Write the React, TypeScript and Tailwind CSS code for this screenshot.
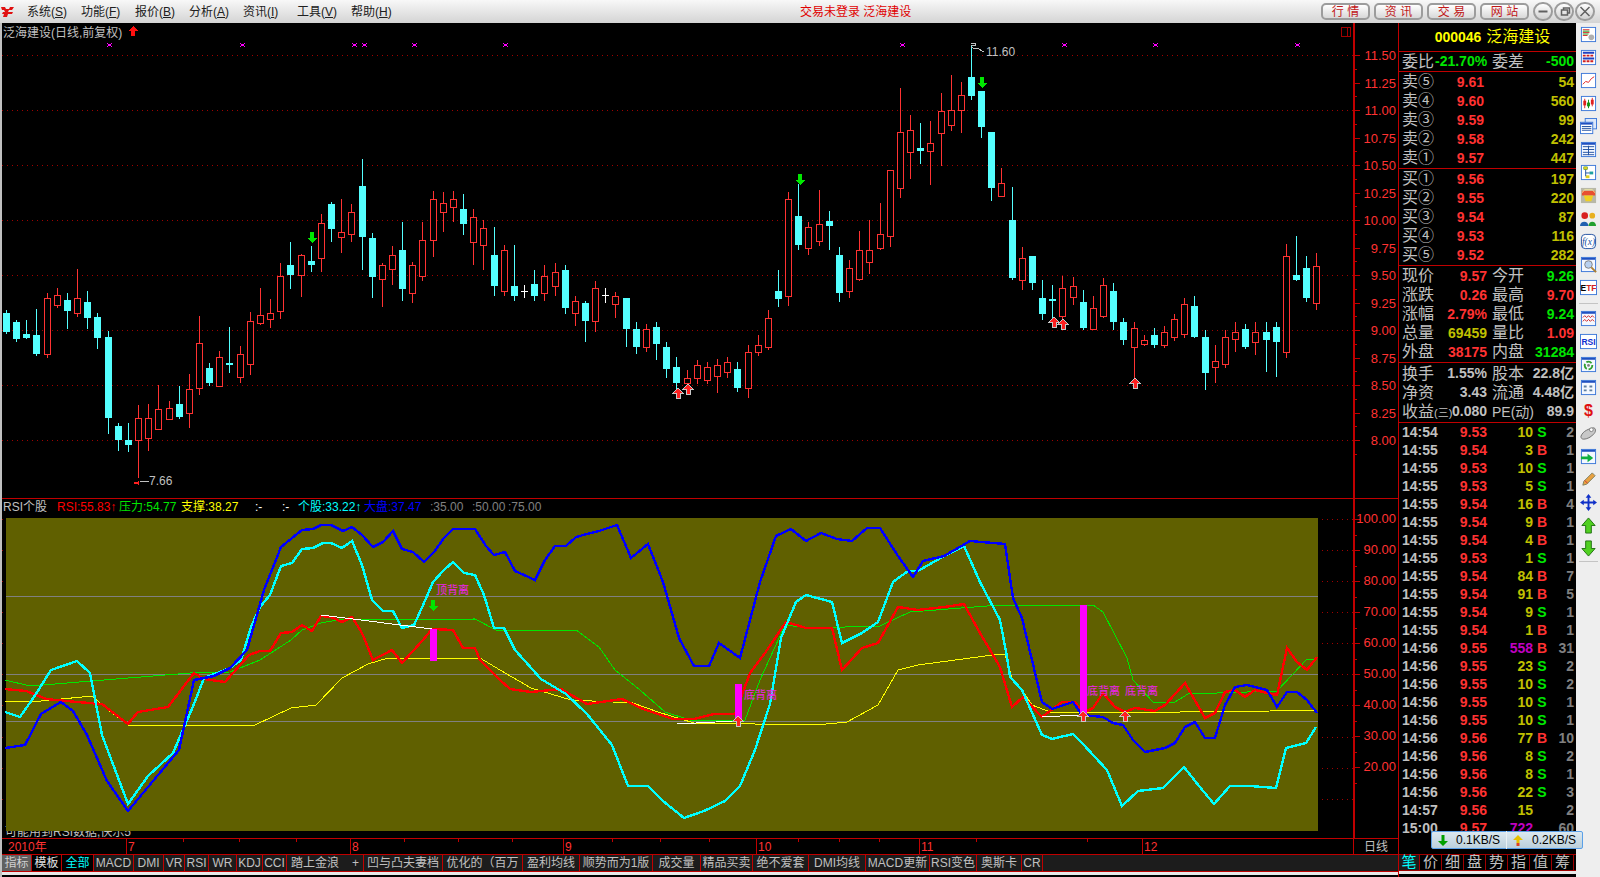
import type { ReactNode } from "react";

type Candle = [number, number, number, number, "r" | "c" | "w"];

// body top, body bottom, wick top, wick bottom (page pixels)
const candles: Candle[] = [
  [313, 332, 310, 334, "c"], [322, 339, 320, 342, "c"], [334, 338, 320, 339, "c"], [335, 354, 309, 356, "c"],
  [298, 354, 293, 358, "r"], [295, 305, 288, 308, "r"], [300, 311, 293, 329, "c"], [298, 313, 269, 317, "r"],
  [302, 318, 291, 329, "c"], [317, 338, 313, 349, "c"], [337, 418, 331, 434, "c"], [426, 440, 423, 451, "c"],
  [440, 445, 423, 452, "c"], [418, 440, 405, 478, "r"], [418, 438, 404, 451, "r"], [409, 429, 385, 430, "r"],
  [408, 419, 401, 419, "r"], [404, 417, 386, 419, "c"], [389, 413, 374, 428, "r"], [343, 388, 316, 395, "r"],
  [368, 383, 363, 386, "c"], [357, 386, 351, 386, "r"], [363, 365, 327, 373, "c"], [354, 377, 346, 383, "r"],
  [321, 364, 312, 375, "r"], [315, 323, 288, 325, "r"], [313, 319, 299, 328, "r"], [276, 311, 263, 319, "r"],
  [265, 275, 242, 289, "c"], [255, 275, 254, 297, "r"], [261, 265, 246, 272, "c"], [223, 258, 214, 272, "r"],
  [204, 229, 202, 242, "c"], [232, 237, 199, 253, "r"], [212, 234, 204, 242, "r"], [186, 237, 159, 270, "c"],
  [238, 277, 233, 298, "c"], [265, 279, 263, 307, "r"], [255, 269, 246, 285, "r"], [250, 289, 222, 301, "c"],
  [265, 293, 262, 303, "r"], [240, 276, 222, 281, "r"], [199, 240, 191, 257, "r"], [203, 212, 192, 232, "r"],
  [199, 207, 191, 222, "r"], [209, 224, 194, 235, "c"], [217, 242, 209, 265, "r"], [228, 245, 220, 270, "r"],
  [255, 286, 227, 296, "c"], [250, 291, 245, 296, "r"], [286, 296, 245, 301, "c"], [291, 292, 285, 298, "w"],
  [284, 296, 270, 301, "c"], [276, 293, 265, 301, "r"], [272, 286, 263, 296, "r"], [270, 308, 265, 314, "c"],
  [301, 313, 296, 326, "r"], [303, 321, 301, 342, "c"], [288, 321, 281, 332, "r"], [295, 296, 288, 303, "w"],
  [296, 304, 292, 318, "r"], [298, 329, 298, 347, "c"], [329, 347, 322, 354, "c"], [329, 347, 324, 352, "r"],
  [327, 344, 322, 360, "c"], [347, 369, 342, 378, "c"], [367, 383, 357, 393, "c"], [378, 383, 370, 393, "r"],
  [365, 378, 360, 384, "r"], [367, 380, 362, 384, "r"], [365, 376, 359, 393, "r"], [362, 372, 357, 378, "r"],
  [369, 388, 362, 392, "c"], [352, 388, 345, 398, "r"], [345, 352, 335, 356, "r"], [318, 347, 310, 350, "r"],
  [291, 299, 270, 307, "c"], [199, 296, 192, 306, "r"], [216, 245, 184, 250, "c"], [227, 248, 222, 255, "r"],
  [224, 241, 190, 246, "r"], [221, 226, 211, 250, "c"], [255, 293, 247, 302, "c"], [268, 291, 260, 298, "r"],
  [250, 279, 231, 281, "r"], [250, 262, 220, 274, "r"], [234, 248, 203, 250, "r"], [170, 236, 170, 247, "r"],
  [132, 188, 88, 198, "r"], [130, 152, 115, 179, "r"], [148, 151, 123, 164, "c"], [143, 151, 121, 185, "r"],
  [111, 133, 93, 166, "r"], [110, 125, 75, 131, "r"], [95, 110, 82, 133, "r"], [77, 96, 45, 100, "c"],
  [91, 127, 91, 138, "c"], [132, 188, 132, 201, "c"], [183, 196, 168, 196, "r"], [220, 278, 187, 280, "c"],
  [258, 280, 247, 290, "r"], [256, 283, 256, 290, "c"], [298, 314, 280, 320, "c"], [299, 301, 285, 320, "c"],
  [288, 316, 276, 330, "r"], [286, 297, 277, 305, "r"], [302, 328, 290, 330, "c"], [308, 329, 296, 330, "r"],
  [285, 316, 278, 318, "r"], [291, 322, 283, 330, "c"], [322, 340, 318, 345, "c"], [328, 347, 322, 385, "r"],
  [340, 344, 335, 346, "r"], [335, 345, 328, 348, "c"], [332, 345, 326, 348, "r"], [319, 337, 314, 341, "r"],
  [304, 334, 298, 338, "r"], [306, 337, 296, 338, "c"], [337, 373, 330, 390, "c"], [361, 367, 345, 383, "r"],
  [337, 364, 330, 368, "r"], [332, 339, 322, 352, "r"], [329, 347, 324, 349, "c"], [332, 342, 322, 355, "r"],
  [332, 340, 322, 372, "c"], [327, 342, 322, 377, "c"], [256, 352, 244, 358, "r"], [275, 280, 236, 281, "c"],
  [268, 298, 256, 302, "c"], [266, 303, 253, 310, "r"],
];

const candleX = (i: number) => Math.round(6 + 10.158 * i);

const blueLine = "5,748 25,745 41,714 61,702 73,711 87,735 107,781 128,811 153,781 179,750 194,680 214,676 230,668 247,650 264,590 281,547 302,530 313,529 321,525 331,525 343,531 352,527 362,535 373,547 383,542 393,531 402,549 413,552 424,562 434,552 444,538 453,529 475,529 486,546 494,555 505,552 515,571 524,575 535,580 545,560 555,546 566,546 576,537 587,534 599,531 617,525 631,558 648,544 663,582 679,638 694,666 709,666 719,643 740,658 760,582 776,536 791,529 806,541 821,533 837,539 852,541 867,528 880,528 898,556 913,577 923,561 944,556 970,541 1005,544 1013,598 1022,618 1042,702 1052,709 1073,702 1082,715 1103,717 1113,723 1123,725 1133,740 1145,752 1165,748 1175,743 1185,727 1195,722 1205,738 1215,738 1225,705 1235,687 1247,685 1267,690 1277,707 1287,692 1297,692 1307,700 1317,713";
const cyanLine = "5,712 20,717 36,694 51,670 77,661 90,673 102,735 128,804 148,776 173,753 194,704 204,678 230,668 241,660 251,627 260,607 270,595 281,566 292,563 302,549 313,548 323,543 331,543 342,548 352,541 362,565 372,600 383,611 393,611 402,628 414,625 424,603 433,582 444,570 453,562 464,573 475,575 484,595 494,628 504,628 515,650 524,660 541,679 566,694 587,714 612,745 628,786 648,786 663,801 684,818 704,811 725,801 740,786 755,750 770,704 781,638 796,602 806,595 832,602 842,643 862,633 878,622 893,582 908,571 918,571 944,556 964,546 980,582 1000,620 1007,657 1010,677 1022,690 1042,735 1052,739 1073,734 1082,743 1107,770 1122,806 1138,791 1163,788 1184,767 1199,786 1214,804 1230,786 1250,786 1276,788 1286,748 1306,743 1316,727";
const redLine = "5,689 26,691 46,699 77,702 102,704 128,724 138,712 168,707 194,673 204,679 225,682 249,655 260,651 270,651 281,633 292,632 302,625 312,631 321,616 331,617 342,622 352,617 362,633 373,660 392,650 402,663 423,640 432,629 453,630 463,648 475,648 480,660 500,680 510,689 531,692 561,689 587,704 622,699 643,709 673,719 694,719 714,714 735,714 750,673 765,653 786,622 806,628 832,628 842,670 862,648 878,643 898,607 918,610 944,607 964,604 980,633 1000,667 1012,707 1023,697 1042,717 1062,702 1075,702 1083,713 1093,708 1103,693 1115,707 1125,712 1135,708 1155,711 1165,705 1185,683 1205,718 1215,713 1225,692 1235,690 1245,697 1255,690 1267,693 1277,695 1287,648 1297,662 1307,670 1317,657";
const greenLine = "5,680 30,686 190,673 230,672 260,660 291,640 302,630 321,623 337,620 475,619 496,630 576,630 599,647 615,670 640,690 665,712 690,720 745,720 760,680 785,625 810,628 880,626 910,612 1000,605 1093,605 1103,612 1127,658 1133,680 1153,702 1175,702 1188,694 1277,691 1307,659 1317,659";
const yellowLine = "5,701 41,701 92,696 107,709 128,725 255,725 291,708 316,705 342,678 368,664 388,658 480,658 500,670 531,688 571,700 633,703 658,712 694,723 816,725 847,722 878,705 898,670 918,665 1000,654 1005,655 1012,678 1022,690 1032,705 1050,712 1180,712 1270,711 1317,710";

const gridMain = [55, 110, 165, 220, 275, 330, 385, 440];
const gridSub = [519, 550, 581, 612, 643, 674, 705, 737, 768, 799];
const markers = [109, 242, 354, 364, 414, 505, 902, 1064, 1155, 1297];

function DownArrow({ x, y }: { x: number; y: number }) {
  return <polygon points={`${x - 2},${y - 6} ${x + 2},${y - 6} ${x + 2},${y} ${x + 5},${y} ${x},${y + 5} ${x - 5},${y}  ${x - 2},${y}`} fill="#00e600" />;
}

function UpArrow({ x, y }: { x: number; y: number }) {
  return (
    <polygon
      points={`${x},${y - 5} ${x + 5},${y} ${x + 2},${y} ${x + 2},${y + 5} ${x - 2},${y + 5} ${x - 2},${y} ${x - 5},${y}`}
      fill="#ff2020"
      stroke="#c8c8c8"
      strokeWidth="1"
    />
  );
}

function MainChart() {
  return (
    <svg viewBox="2 23 1351 475" className="block h-[475px] w-[1351px]" shapeRendering="crispEdges">
      {gridMain.map((y) => (
        <line key={y} x1="2" x2="1353" y1={y + 0.5} y2={y + 0.5} stroke="#a00000" strokeDasharray="1 4" />
      ))}
      {markers.map((x) => (
        <path key={x} d={`M${x - 2} 43h1v1h-1zM${x + 2} 43h1v1h-1zM${x} 44h1v2h-1zM${x - 1} 44h3v2h-3zM${x - 2} 46h1v1h-1zM${x + 2} 46h1v1h-1z`} fill="#ff00ff" />
      ))}
      {candles.map(([top, bottom, high, low, kind], i) => {
        const x = candleX(i);
        if (kind === "r") {
          return (
            <g key={i}>
              <line x1={x + 0.5} x2={x + 0.5} y1={high} y2={low} stroke="#ff3232" />
              <rect x={x - 2.5} y={top + 0.5} width={6} height={bottom - top} fill="#000" stroke="#ff3232" />
            </g>
          );
        }
        const color = kind === "c" ? "#54ffff" : "#ffffff";
        return (
          <g key={i}>
            <line x1={x + 0.5} x2={x + 0.5} y1={high} y2={low} stroke={color} />
            <rect x={x - 3} y={top} width={7} height={Math.max(bottom - top, 1)} fill={color} />
          </g>
        );
      })}
      <DownArrow x={312} y={238} />
      <DownArrow x={800} y={180} />
      <DownArrow x={982} y={83} />
      <UpArrow x={678} y={393} />
      <UpArrow x={688} y={389} />
      <UpArrow x={1054} y={322} />
      <UpArrow x={1063} y={324} />
      <UpArrow x={1135} y={383} />
      <polygon points="133,26 138,31 135,31 135,36 131,36 131,31 128,31" fill="#ff1010" />
      <rect x="1341.5" y="27.5" width="9" height="9" fill="none" stroke="#a00000" />
      <line x1="1347.5" x2="1347.5" y1="27" y2="37" stroke="#a00000" />
      <path d="M971 43h4v2h-4M971 47l4 2M975 48h3l4 3h2" fill="none" stroke="#c0c0c0" />
      <text x="986" y="56" fill="#c0c0c0" fontSize="12" shapeRendering="auto">11.60</text>
      <path d="M134 482h3l2-2 0 5-2-1h-3z" fill="#ff2020" />
      <path d="M140 481h9" stroke="#c0c0c0" />
      <text x="149" y="485" fill="#c0c0c0" fontSize="12">7.66</text>
    </svg>
  );
}

function SubChart() {
  return (
    <svg viewBox="2 518 1351 320" className="block h-[320px] w-[1351px]" shapeRendering="crispEdges">
      <text x="5" y="836" fill="#c0c0c0" fontSize="12">可能用到RSI数据,快乐5</text>
      {gridSub.map((y) => (
        <line key={y} x1="2" x2="1353" y1={y + 0.5} y2={y + 0.5} stroke="#a00000" strokeDasharray="1 4" />
      ))}
      <rect x="6" y="518" width="1312" height="313" fill="#606000" />
      {[596, 674, 721].map((y) => (
        <line key={y} x1="6" x2="1318" y1={y + 0.5} y2={y + 0.5} stroke="#808080" />
      ))}
      <polyline points={greenLine} fill="none" stroke="#00e600" />
      <polyline points={yellowLine} fill="none" stroke="#ffff00" />
      <polyline points={redLine} fill="none" stroke="#ff0000" strokeWidth="2.4" />
      <polyline points={cyanLine} fill="none" stroke="#00ffff" strokeWidth="2.4" />
      <polyline points={blueLine} fill="none" stroke="#0000ff" strokeWidth="2.4" />
      <polyline points="321,615 432,629" fill="none" stroke="#ffffff" />
      <polyline points="677,724 735,721" fill="none" stroke="#ffffff" />
      <polyline points="1042,717 1078,715" fill="none" stroke="#ffffff" />
      <rect x="430" y="629" width="7" height="32" fill="#ff00ff" />
      <rect x="735" y="684" width="7" height="36" fill="#ff00ff" />
      <rect x="1080" y="605" width="7" height="109" fill="#ff00ff" />
      <DownArrow x={433} y={606} />
      <UpArrow x={738} y={721} />
      <UpArrow x={1083} y={716} />
      <UpArrow x={1125} y={716} />
      <g fill="#f020f0" fontSize="11" fontWeight="400">
        <text x="436" y="594">顶背离</text>
        <text x="744" y="699">底背离</text>
        <text x="1087" y="695">底背离</text>
        <text x="1125" y="695">底背离</text>
      </g>
    </svg>
  );
}

function Axis({ labels, step, first, height, shift = 0 }: { labels: string[]; step: number; first: number; height: number; shift?: number }) {
  const longTicks = labels.map((_, i) => first + step * i);
  return (
    <div className="flex w-[45px] shrink-0 border-l-2 border-[#c00000]">
      <svg width="5" height={height} className="block shrink-0" shapeRendering="crispEdges">
        {longTicks.map((y) => (
          <g key={y} stroke="#c00000">
            <line x1="0" x2="5" y1={y + 0.5} y2={y + 0.5} />
            <line x1="0" x2="2" y1={y + step / 2 + 0.5} y2={y + step / 2 + 0.5} />
          </g>
        ))}
      </svg>
      <div className="flex min-w-0 flex-1 flex-col pr-[2px] text-right text-[13px] text-[#ff3232]" style={{ paddingTop: first - step / 2 + shift }}>
        {labels.map((label) => (
          <div key={label} className="flex items-center justify-end" style={{ height: step }}>
            {label}
          </div>
        ))}
      </div>
    </div>
  );
}

function Legend() {
  return (
    <div className="flex h-[19px] items-center whitespace-nowrap pb-[3px] pl-[1px] text-[12px]">
      <span className="w-[54px] text-[#c0c0c0]">RSI个股</span>
      <span className="w-[62px] text-[#ff0000]">RSI:55.83↑</span>
      <span className="w-[62px] text-[#00e600]">压力:54.77</span>
      <span className="w-[74px] text-[#ffff00]">支撑:38.27</span>
      <span className="w-[27px] text-white">:-</span>
      <span className="w-[16px] text-white">:-</span>
      <span className="w-[66px] text-[#00ffff]">个股:33.22↑</span>
      <span className="w-[66px] text-[#0000ff]">大盘:37.47</span>
      <span className="w-[42px] text-[#808080]">:35.00</span>
      <span className="w-[36px] text-[#808080]">:50.00</span>
      <span className="text-[#808080]">:75.00</span>
    </div>
  );
}

function TimeRow() {
  const cells: [string, number][] = [["2010年", 125], ["7", 224], ["8", 213], ["9", 193], ["10", 163], ["11", 223], ["12", 211]];
  const ticks = [183, 239, 296, 404, 458, 512, 612, 660, 709, 798, 839, 879, 976, 1087];
  return (
    <div className="relative flex h-[16px] border-t border-[#c00000] text-[12px] text-[#ff3232]">
      {cells.map(([label, width], i) => (
        <div key={label} className={`flex items-center border-r border-[#c00000] ${i === 0 ? "pl-[6px]" : "pl-[1px]"}`} style={{ width }}>
          {label}
        </div>
      ))}
      <div className="flex w-[44px] items-center justify-center text-[#c0c0c0]">日线</div>
      <svg className="pointer-events-none absolute left-0 top-0" width="1352" height="4" shapeRendering="crispEdges">
        {ticks.map((x) => (
          <line key={x} x1={x - 2} x2={x - 2} y1="0" y2="3" stroke="#c00000" />
        ))}
      </svg>
    </div>
  );
}

const tabs: [string, number, string][] = [
  ["指标", 30, "bg-[#606060] text-[#d0d0d0]"], ["模板", 30, "bg-black text-[#e0e0e0]"], ["全部", 32, "bg-black text-[#00ffff]"],
  ["MACD", 40, ""], ["DMI", 30, ""], ["VR", 21, ""], ["RSI", 24, ""], ["WR", 28, ""], ["KDJ", 26, ""], ["CCI", 24, ""],
  ["踏上金浪", 77, ""], ["凹与凸夫妻档", 79, ""], ["优化的（百万", 80, ""], ["盈利均线", 57, ""], ["顺势而为1版", 73, ""], ["成交量", 48, ""],
  ["精品买卖", 52, ""], ["绝不爱套", 56, ""], ["DMI均线", 57, ""], ["MACD更新", 64, ""], ["RSI变色", 47, ""], ["奥斯卡", 45, ""], ["CR", 21, ""],
];

function TabsRow() {
  return (
    <div className="flex h-[18px] border-y border-[#c00000] bg-[#1c1c1c] text-[12px] text-[#c0c0c0]">
      {tabs.map(([label, width, extra]) =>
        label === "踏上金浪" ? (
          <div key={label} className="flex items-center justify-between whitespace-nowrap border-r border-[#c00000] pl-[4px] pr-[4px]" style={{ width }}>
            <span>{label}</span>
            <span>+</span>
          </div>
        ) : (
          <div key={label} className={`flex items-center justify-center whitespace-nowrap border-r border-[#c00000] ${extra}`} style={{ width }}>
            {label}
          </div>
        ),
      )}
    </div>
  );
}

function Row({ children, className = "h-[19px]" }: { children: ReactNode; className?: string }) {
  return <div className={`flex items-center pl-[3px] pr-[2px] ${className}`}>{children}</div>;
}

const Label = ({ children, className = "w-[54px]" }: { children: ReactNode; className?: string }) => (
  <span className={`shrink-0 whitespace-nowrap text-[16px] font-normal text-[#c0c0c0] ${className}`}>{children}</span>
);

const asks: [string, string, string][] = [["卖⑤", "9.61", "54"], ["卖④", "9.60", "560"], ["卖③", "9.59", "99"], ["卖②", "9.58", "242"], ["卖①", "9.57", "447"]];
const bids: [string, string, string][] = [["买①", "9.56", "197"], ["买②", "9.55", "220"], ["买③", "9.54", "87"], ["买④", "9.53", "116"], ["买⑤", "9.52", "282"]];

function Quote({ rows }: { rows: [string, string, string][] }) {
  return (
    <div className="flex h-[97px] flex-col justify-center border-b border-[#c00000]">
      {rows.map(([label, price, vol]) => (
        <Row key={label}>
          <Label>{label}</Label>
          <span className="w-[28px] text-right text-[#ff3232]">{price}</span>
          <span className="flex-1 text-right text-[#c0c000]">{vol}</span>
        </Row>
      ))}
    </div>
  );
}

const stats: [string, string, string, string, string, string][] = [
  ["现价", "9.57", "text-[#ff3232]", "今开", "9.26", "text-[#00e600]"],
  ["涨跌", "0.26", "text-[#ff3232]", "最高", "9.70", "text-[#ff3232]"],
  ["涨幅", "2.79%", "text-[#ff3232]", "最低", "9.24", "text-[#00e600]"],
  ["总量", "69459", "text-[#c0c000]", "量比", "1.09", "text-[#ff3232]"],
  ["外盘", "38175", "text-[#ff3232]", "内盘", "31284", "text-[#00e600]"],
];
const funds: [string, string, string, string][] = [
  ["换手", "1.55%", "股本", "22.8亿"],
  ["净资", "3.43", "流通", "4.48亿"],
];

type Tick = [string, string, string, string, string];
const trades: Tick[] = [
  ["14:54", "9.53", "10", "S", "2"], ["14:55", "9.54", "3", "B", "1"], ["14:55", "9.53", "10", "S", "1"], ["14:55", "9.53", "5", "S", "1"],
  ["14:55", "9.54", "16", "B", "4"], ["14:55", "9.54", "9", "B", "1"], ["14:55", "9.54", "4", "B", "1"], ["14:55", "9.53", "1", "S", "1"],
  ["14:55", "9.54", "84", "B", "7"], ["14:55", "9.54", "91", "B", "5"], ["14:55", "9.54", "9", "S", "1"], ["14:55", "9.54", "1", "B", "1"],
  ["14:56", "9.55", "558", "B", "31"], ["14:56", "9.55", "23", "S", "2"], ["14:56", "9.55", "10", "S", "2"], ["14:56", "9.55", "10", "S", "1"],
  ["14:56", "9.55", "10", "S", "1"], ["14:56", "9.56", "77", "B", "10"], ["14:56", "9.56", "8", "S", "2"], ["14:56", "9.56", "8", "S", "1"],
  ["14:56", "9.56", "22", "S", "3"], ["14:57", "9.56", "15", "", "2"], ["15:00", "9.57", "722", "", "60"],
];

function QuotePanel() {
  return (
    <div className="relative flex w-[178px] shrink-0 flex-col border-l border-[#c00000] bg-black text-[14px] font-bold">
      <div className="flex h-[29px] items-center justify-center gap-[5px] border-b border-[#c00000] pl-[10px] text-[#ffff00]">
        <span>000046</span>
        <span className="text-[16px] font-normal">泛海建设</span>
      </div>
      <Row className="h-[20px] border-b border-[#c00000]">
        <Label className="w-[33px]">委比</Label>
        <span className="w-[52px] text-right text-[#00e600]">-21.70%</span>
        <Label className="ml-[5px] w-[32px]">委差</Label>
        <span className="flex-1 text-right text-[#00e600]">-500</span>
      </Row>
      <Quote rows={asks} />
      <Quote rows={bids} />
      <div className="flex h-[97px] flex-col justify-center border-b border-[#c00000]">
        {stats.map(([a, b, bColor, c, d, dColor]) => (
          <Row key={a}>
            <Label className="w-[38px]">{a}</Label>
            <span className={`w-[47px] text-right ${bColor}`}>{b}</span>
            <Label className="ml-[5px] w-[34px]">{c}</Label>
            <span className={`flex-1 text-right ${dColor}`}>{d}</span>
          </Row>
        ))}
      </div>
      <div className="flex h-[60px] flex-col justify-center border-b border-[#c00000] text-[#c0c0c0]">
        {funds.map(([a, b, c, d]) => (
          <Row key={a}>
            <Label className="w-[38px]">{a}</Label>
            <span className="w-[47px] text-right">{b}</span>
            <Label className="ml-[5px] w-[34px]">{c}</Label>
            <span className="flex-1 text-right">{d}</span>
          </Row>
        ))}
        <Row>
          <Label className="w-[49px]">
            收益<span className="text-[11px]">(三)</span>
          </Label>
          <span className="w-[36px] text-right">0.080</span>
          <Label className="ml-[5px] w-[46px]">
            <span className="text-[14px]">PE(动)</span>
          </Label>
          <span className="flex-1 text-right">89.9</span>
        </Row>
      </div>
      <div className="h-[414px] overflow-hidden">
        {trades.map(([time, price, vol, side, count], i) => (
          <Row key={i} className="h-[18px]">
            <span className="w-[38px] text-[#c0c0c0]">{time}</span>
            <span className="w-[47px] text-right text-[#ff3232]">{price}</span>
            <span className={`w-[46px] text-right ${Number(vol) > 500 ? "text-[#c000c0]" : "text-[#c0c000]"}`}>{vol}</span>
            <span className={`w-[18px] text-center ${side === "B" ? "text-[#ff3232]" : "text-[#00e600]"}`}>{side}</span>
            <span className="flex-1 text-right text-[#808080]">{count}</span>
          </Row>
        ))}
      </div>
      <div className="h-[17px]" />
      <div className="flex h-[17px] border-y border-[#a00000] text-[15px] font-normal text-[#c0c0c0]">
        {["笔", "价", "细", "盘", "势", "指", "值", "筹"].map((t, i) => (
          <div key={t} className={`flex items-center justify-center border-r border-[#a00000] ${i === 0 ? "w-[21px] bg-[#1c1c1c] text-[#00ffff]" : "w-[22px]"}`}>
            {t}
          </div>
        ))}
      </div>
      <div className="h-[3px] bg-[#e8e8e8]" />
      <div className="absolute left-[32px] top-[808px] flex h-[18px] w-[152px] items-center rounded-[2px] border border-[#5aa0e8] bg-gradient-to-b from-[#dce8ef] to-[#bcd0dc] text-[12px] font-normal text-black">
        <span className="flex w-[75px] items-center justify-between border-r border-[#e8f0f4] pl-[6px] pr-[6px]">
          <svg width="10" height="11" viewBox="0 0 10 11"><path d="M3.5 0h3v6H10L5 11 0 6h3.5z" fill="#00a000" /></svg>
          0.1KB/S
        </span>
        <span className="flex flex-1 items-center justify-between pl-[6px] pr-[6px]">
          <svg width="10" height="11" viewBox="0 0 10 11"><path d="M5 0l5 5H6.5v3h-3V5H0z" fill="#e8c000" /><rect x="3.5" y="8" width="3" height="3" fill="#e04020" /></svg>
          0.2KB/S
        </span>
      </div>
    </div>
  );
}

function Win({ children }: { children?: ReactNode }) {
  return (
    <g>
      <rect x="1.5" y="1.5" width="15" height="15" fill="#f4f8ff" stroke="#3c78d8" />
      <rect x="2" y="2" width="14" height="2" fill="#2050c0" />
      {children}
    </g>
  );
}

const toolIcons: ReactNode[] = [
  <g key="a"><rect x="1.5" y="1.5" width="15" height="15" fill="#fff" stroke="#3c78d8" /><path d="M3 4h7M3 7h7M3 10h5" stroke="#d02020" /><path d="M3 5.5h7M3 8.5h6" stroke="#20a020" /><circle cx="12" cy="12" r="3" fill="#b0b0b0" /></g>,
  <g key="b"><rect x="1.5" y="1.5" width="15" height="15" fill="#fff" stroke="#3c78d8" /><path d="M3 4h12M3 10h12" stroke="#2040c0" strokeWidth="2" /><path d="M3 7h12M3 13h12" stroke="#d02020" strokeWidth="2" strokeDasharray="3 1" /></g>,
  <g key="c"><rect x="1.5" y="1.5" width="15" height="15" fill="#fff" stroke="#3c78d8" /><path d="M3 13l3-3 3 1 3-4 3-2" fill="none" stroke="#e02020" /></g>,
  <g key="d"><rect x="1.5" y="1.5" width="15" height="15" fill="#fff" stroke="#3c78d8" /><path d="M5 4v10M13 3v9" stroke="#e02020" /><rect x="3.5" y="6" width="3" height="5" fill="#e02020" /><rect x="11.5" y="5" width="3" height="5" fill="#e02020" /><path d="M9 5v9" stroke="#109010" /><rect x="7.5" y="8" width="3" height="4" fill="#109010" /></g>,
  <g key="e"><rect x="5.5" y="0.5" width="12" height="11" fill="#dce8fa" stroke="#3c78d8" /><rect x="0.5" y="4.5" width="13" height="12" fill="#fff" stroke="#3c78d8" /><rect x="1" y="5" width="12" height="2" fill="#2050c0" /><path d="M2 9h10M2 11h10M2 13h10" stroke="#2050a0" /></g>,
  <Win key="f"><path d="M3 6h12M3 9h12M3 12h12M3 14.5h12M9 5v10" stroke="#2050a0" /></Win>,
  <g key="g"><rect x="1.5" y="1.5" width="15" height="15" fill="#fff" stroke="#3c78d8" /><rect x="4" y="3" width="4" height="3" fill="#e0d020" stroke="#208020" strokeWidth="0.5" /><rect x="10" y="8" width="4" height="3" fill="#20a0a0" /><rect x="6" y="12" width="4" height="3" fill="#e0d020" /><path d="M6 6v7M6 9.5h4" stroke="#2050a0" /></g>,
  <g key="h"><rect x="1" y="1" width="16" height="16" fill="#b8b8a8" /><path d="M2 4h14v5H2z" fill="#e85030" /><path d="M4 9h10l-2 6H6z" fill="#f0d020" /><path d="M2 6l3-3h8l3 3" fill="none" stroke="#f8f0a0" /></g>,
  <g key="i"><circle cx="5" cy="6" r="3.5" fill="#d82020" /><circle cx="13" cy="6" r="3" fill="#e8b020" /><path d="M0 17c0-6 9-6 9 0z" fill="#2060b0" /><path d="M9 17c0-6 8-6 8 0z" fill="#20a030" /></g>,
  <g key="j"><rect x="1.5" y="1.5" width="15" height="15" rx="4" fill="#fff" stroke="#2050a0" /><text x="9" y="13" textAnchor="middle" fontSize="10" fontStyle="italic" fontFamily="Liberation Serif, serif" fill="#2050a0">f(x)</text></g>,
  <Win key="k"><circle cx="9" cy="9" r="4" fill="#b8d0f0" stroke="#808080" /><path d="M12 12l5 5" stroke="#b08030" strokeWidth="2" /></Win>,
  <g key="l"><rect x="0.5" y="1.5" width="17" height="15" fill="#fff" stroke="#3c78d8" /><text x="9" y="13" textAnchor="middle" fontSize="9" fontWeight="700" fontFamily="Liberation Sans, sans-serif" fill="#000">E<tspan fill="#d02020">TF</tspan></text></g>,
  <Win key="m"><path d="M3 8l2-2 2 2 2-2 2 2 2-2 2 2M3 12l2-2 2 2 2-2 2 2 2-2 2 2" fill="none" stroke="#d02020" /></Win>,
  <g key="n"><rect x="0.5" y="1.5" width="17" height="15" fill="#fff" stroke="#3c78d8" /><text x="9" y="13" textAnchor="middle" fontSize="9" fontWeight="700" fontFamily="Liberation Sans, sans-serif" fill="#1030d0">RSI</text></g>,
  <Win key="o"><circle cx="9" cy="10" r="4" fill="none" stroke="#30a030" strokeWidth="2" strokeDasharray="6 2" /><circle cx="9" cy="10" r="1.5" fill="#808080" /></Win>,
  <Win key="p"><path d="M4 7h3v2H4zM10 7h3v2h-3zM4 11h3v2H4zM10 11h3v2h-3z" fill="#6080a0" /></Win>,
  <g key="q"><text x="9" y="15" textAnchor="middle" fontSize="17" fontWeight="700" fontFamily="Liberation Sans, sans-serif" fill="#e01010">$</text></g>,
  <g key="r"><path d="M1 12c2-6 9-8 13-9 3 0 3 4 1 6-3 4-8 6-11 6-2 0-3-1-3-3z" fill="#c8c8c8" stroke="#707070" /><circle cx="12" cy="5" r="2" fill="#fff" stroke="#808080" /></g>,
  <Win key="s"><path d="M1 9h7V6l6 4.5L8 15v-3H1z" fill="#10b040" /></Win>,
  <g key="t"><path d="M3 15l1-4L13 2l3 3-9 9z" fill="#e8a040" stroke="#808060" /><path d="M5 10l3 3" stroke="#d03030" /></g>,
  <g key="u"><path d="M9 0l3 4h-2v4h4V6l4 3-4 3v-2h-4v4h2l-3 4-3-4h2v-4H4v2L0 9l4-3v2h4V4H6z" fill="#1030c8" /></g>,
  <g key="v"><path d="M9 1l7 8h-4v8H6V9H2z" fill="#50d020" stroke="#207010" /></g>,
  <g key="w"><path d="M9 17L2 9h4V1h6v8h4z" fill="#50d020" stroke="#207010" /></g>,
];

function Toolbar() {
  return (
    <div className="flex w-[24px] shrink-0 flex-col items-center bg-[#eeeeee]">
      {toolIcons.map((icon, i) => (
        <div key={i} className="flex w-full flex-col items-center">
          {i === 12 ? <div className="my-[3.5px] h-px w-[19px] bg-[#c4c4c4]" /> : null}
          <div className="flex h-[23px] items-center justify-center">
            <svg width="17" height="17" viewBox="0 0 18 18">{icon}</svg>
          </div>
        </div>
      ))}
      <div className="mt-[1px] h-px w-[19px] bg-[#c4c4c4]" />
    </div>
  );
}

const menus: [string, string][] = [["系统", "S"], ["功能", "F"], ["报价", "B"], ["分析", "A"], ["资讯", "I"], ["工具", "V"], ["帮助", "H"]];

function TitleBar() {
  return (
    <div className="flex h-[23px] shrink-0 items-center bg-gradient-to-b from-[#f8f8f8] to-[#d4d4d4] text-[12px] text-[#202020]">
      <svg width="13" height="12" viewBox="0 0 13 12" className="ml-[1px] mr-[10px] shrink-0">
        <path d="M0 1h4l1 2h3l1-2h4l-2 3H8L7 6h5l-1 2H7l-1 3H2l1-3H1l1-2h2L3 4H1z" fill="#e01010" />
      </svg>
      {menus.map(([name, key]) => (
        <div key={key} className="w-[54px] whitespace-nowrap pl-[3px]">
          {name}(<span className="underline">{key}</span>)
        </div>
      ))}
      <div className="ml-[398px] w-[514px] whitespace-nowrap text-[#e00000]">交易未登录 泛海建设</div>
      <div className="ml-[7px] flex gap-[4px] pr-[4px]">
        {["行 情", "资 讯", "交 易", "网 站"].map((t) => (
          <div key={t} className="flex h-[17px] w-[49px] items-center justify-center rounded-[5px] border-2 border-[#9c9c9c] bg-gradient-to-b from-white to-[#d8d8d8] text-[#c01818]">
            {t}
          </div>
        ))}
      </div>
      <div className="flex gap-[1px]">
        {["M5 9.5h9", "M7 8h6v5H7zM9 8V6h6v5h-2", "M5 5l9 9M14 5l-9 9"].map((d) => (
          <div key={d} className="h-[19px] w-[20px] rounded-full border-2 border-[#9c9c9c] bg-gradient-to-b from-white to-[#d0d0d0]">
            <svg width="16" height="15" viewBox="2 2 15 15"><path d={d} fill="none" stroke="#606060" strokeWidth={d.length < 12 ? 2 : 1.5} /></svg>
          </div>
        ))}
      </div>
    </div>
  );
}

export default function App() {
  const mainLabels = ["11.50", "11.25", "11.00", "10.75", "10.50", "10.25", "10.00", "9.75", "9.50", "9.25", "9.00", "8.75", "8.50", "8.25", "8.00"];
  const subLabels = ["100.00", "90.00", "80.00", "70.00", "60.00", "50.00", "40.00", "30.00", "20.00"];
  return (
    <div className="flex h-[877px] w-[1600px] flex-col overflow-hidden bg-black font-['Liberation_Sans','Noto_Sans_CJK_SC',sans-serif]">
      <TitleBar />
      <div className="flex min-h-0 flex-1">
        <div className="flex w-[1398px] shrink-0 flex-col border-l-2 border-[#c0c0c0]">
          <div className="relative flex h-[476px] border-b border-[#c00000]">
            <div className="absolute left-[1px] top-[1px] whitespace-nowrap text-[12px] text-[#c0c0c0]">泛海建设(日线,前复权)</div>
            <MainChart />
            <Axis labels={mainLabels} step={27.5} first={32} height={475} shift={1} />
          </div>
          <div className="flex h-[339px]">
            <div className="flex flex-col">
              <Legend />
              <SubChart />
            </div>
            <Axis labels={subLabels} step={31} first={20} height={339} />
          </div>
          <TimeRow />
          <TabsRow />
          <div className="h-[3px] bg-[#e8e8e8]" />
        </div>
        <QuotePanel />
        <Toolbar />
      </div>
    </div>
  );
}
